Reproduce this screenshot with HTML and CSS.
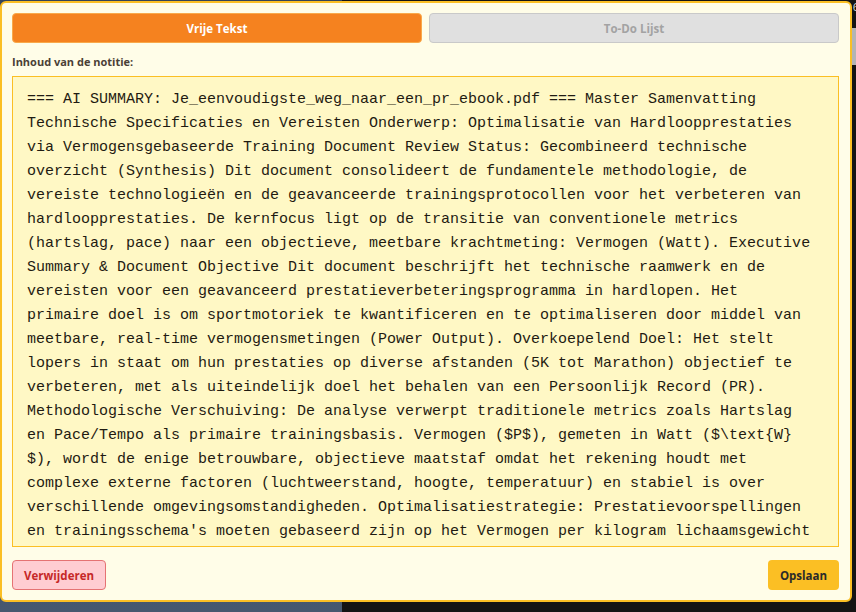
FILE: index.html
```html
<!DOCTYPE html>
<html lang='nl'>

<head>
  <meta charset='utf-8'>
  <meta name='viewport' content='width=device-width, initial-scale=1'>
  <title>Notitie bewerken</title>
  <link rel="stylesheet" href="styles.css">
</head>

<body>
  <div class="backdrop">
    <div class="side"></div>
    <div class="main">
      <span class="count">6</span>
      <div class="scroll-bit"></div>
    </div>
  </div>

  <div class="modal">
    <div class="tabs">
      <button class="tab active">Vrije Tekst</button>
      <button class="tab">To-Do Lijst</button>
    </div>
    <label class="field-label" for="note">Inhoud van de notitie:</label>
    <textarea id="note" class="note" spellcheck="false">=== AI SUMMARY: Je_eenvoudigste_weg_naar_een_pr_ebook.pdf === Master Samenvatting Technische Specificaties en Vereisten Onderwerp: Optimalisatie van Hardloopprestaties via Vermogensgebaseerde Training Document Review Status: Gecombineerd technische overzicht (Synthesis) Dit document consolideert de fundamentele methodologie, de vereiste technologieën en de geavanceerde trainingsprotocollen voor het verbeteren van hardloopprestaties. De kernfocus ligt op de transitie van conventionele metrics (hartslag, pace) naar een objectieve, meetbare krachtmeting: Vermogen (Watt). Executive Summary &amp; Document Objective Dit document beschrijft het technische raamwerk en de vereisten voor een geavanceerd prestatieverbeteringsprogramma in hardlopen. Het primaire doel is om sportmotoriek te kwantificeren en te optimaliseren door middel van meetbare, real-time vermogensmetingen (Power Output). Overkoepelend Doel: Het stelt lopers in staat om hun prestaties op diverse afstanden (5K tot Marathon) objectief te verbeteren, met als uiteindelijk doel het behalen van een Persoonlijk Record (PR). Methodologische Verschuiving: De analyse verwerpt traditionele metrics zoals Hartslag en Pace/Tempo als primaire trainingsbasis. Vermogen ($P$), gemeten in Watt ($\text{W}&#8203;$), wordt de enige betrouwbare, objectieve maatstaf omdat het rekening houdt met complexe externe factoren (luchtweerstand, hoogte, temperatuur) en stabiel is over verschillende omgevingsomstandigheden. Optimalisatiestrategie: Prestatievoorspellingen en trainingsschema's moeten gebaseerd zijn op het Vermogen per kilogram lichaamsgewicht ($\text{W/kg}$), omdat dit de beste voorspeller is van prestaties op de weg.</textarea>
    <div class="actions">
      <button class="btn btn-delete">Verwijderen</button>
      <button class="btn btn-save">Opslaan</button>
    </div>
  </div>
</body>

</html>
```

FILE: styles.css
```css
* {
  margin: 0;
  padding: 0;
  box-sizing: border-box;
}

html,
body {
  width: 100%;
  height: 100%;
}

body {
  background-color: #141414;
  overflow: hidden;
  font-family: "Open Sans", "Noto Sans", Arial, sans-serif;
}

/* page behind the dialog */
.backdrop {
  display: grid;
  grid-template-columns: 342px 1fr;
  height: 100%;
}

.backdrop .side {
  background: linear-gradient(#33445a, #46586f);
}

.backdrop .main {
  display: flex;
  flex-direction: column;
  align-items: flex-end;
  background-color: #141414;
}

.backdrop .count {
  color: #d8d8d8;
  font-size: 11px;
  line-height: 14px;
  margin-right: -3px;
}

.backdrop .scroll-bit {
  width: 4px;
  height: 37px;
  margin-top: 14px;
  background-color: #b4b4b4;
}

/* dialog */
.modal {
  position: absolute;
  top: 1px;
  left: 0;
  width: 852px;
  height: 601px;
  display: flex;
  flex-direction: column;
  padding: 10px 11px 10px 10px;
  background-color: #fffde8;
  border: 2px solid #fbbf24;
  border-radius: 6px;
}

.tabs {
  display: grid;
  grid-template-columns: 1fr 1fr;
  gap: 7px;
}

.tab {
  height: 30px;
  border: 1px solid #c9c9c9;
  border-radius: 4px;
  background-color: #e0e0e0;
  color: #a3a3a3;
  font-family: inherit;
  font-size: 11.5px;
  font-weight: 700;
  cursor: pointer;
}

.tab.active {
  background-color: #f5821f;
  border-color: #f9a94a;
  color: #fff;
}

.field-label {
  margin: 12px 0 7px;
  color: #4a4036;
  font-size: 11px;
  font-weight: 700;
  line-height: 14px;
}

.note {
  flex: 1;
  min-height: 0;
  padding: 11px 22px 10px 14px;
  border: 1px solid #fbbf24;
  background-color: #fff8c5;
  color: #1f1b12;
  font-family: "Courier New", "Liberation Mono", monospace;
  font-size: 15px;
  line-height: 24px;
  resize: none;
  outline: none;
  scrollbar-width: none;
}

.actions {
  display: flex;
  justify-content: space-between;
  margin-top: 13px;
}

.btn {
  height: 30px;
  padding: 0 11px;
  border: 1px solid transparent;
  border-radius: 4px;
  font-family: inherit;
  font-size: 11.5px;
  font-weight: 700;
  cursor: pointer;
}

.btn-delete {
  background-color: #ffcdd2;
  border-color: #e57373;
  color: #c62828;
}

.btn-save {
  background-color: #fbbf24;
  color: #2a2a2a;
}
```
